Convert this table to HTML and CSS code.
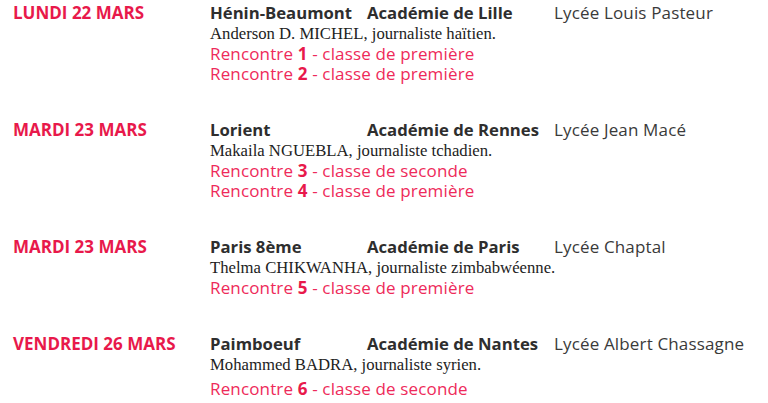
FILE: index.html
```html
<!DOCTYPE html>
<html lang="fr">
<head>
<meta charset="utf-8">
<link rel="stylesheet" href="styles.css">
</head>
<body>
<main class="list">
  <section class="event">
    <div class="date">LUNDI 22 MARS</div>
    <div class="city">Hénin-Beaumont</div>
    <div class="acad">Académie de Lille</div>
    <div class="school">Lycée Louis Pasteur</div>
    <div class="journalist">Anderson D. MICHEL, journaliste haïtien.</div>
    <div class="meet">Rencontre <b>1</b> - classe de première</div>
    <div class="meet">Rencontre <b>2</b> - classe de première</div>
  </section>
  <section class="event">
    <div class="date">MARDI 23 MARS</div>
    <div class="city">Lorient</div>
    <div class="acad">Académie de Rennes</div>
    <div class="school">Lycée Jean Macé</div>
    <div class="journalist">Makaila NGUEBLA, journaliste tchadien.</div>
    <div class="meet">Rencontre <b>3</b> - classe de seconde</div>
    <div class="meet">Rencontre <b>4</b> - classe de première</div>
  </section>
  <section class="event">
    <div class="date">MARDI 23 MARS</div>
    <div class="city">Paris 8ème</div>
    <div class="acad">Académie de Paris</div>
    <div class="school">Lycée Chaptal</div>
    <div class="journalist">Thelma CHIKWANHA, journaliste zimbabwéenne.</div>
    <div class="meet">Rencontre <b>5</b> - classe de première</div>
  </section>
  <section class="event">
    <div class="date">VENDREDI 26 MARS</div>
    <div class="city">Paimboeuf</div>
    <div class="acad">Académie de Nantes</div>
    <div class="school">Lycée Albert Chassagne</div>
    <div class="journalist">Mohammed BADRA, journaliste syrien.</div>
    <div class="meet meet-spaced">Rencontre <b>6</b> - classe de seconde</div>
  </section>
</main>
</body>
</html>
```

FILE: styles.css
```css
html, body {
  margin: 0;
  padding: 0;
  background: #ffffff;
}

body {
  font-family: "Open Sans", "Liberation Sans", sans-serif;
  color: #333333;
}

.list {
  display: flex;
  flex-direction: column;
  gap: 35px;
  padding: 2px 0 0 13px;
}

.event {
  display: grid;
  grid-template-columns: 197px 157px 187px auto;
}

.date,
.city,
.acad,
.school {
  line-height: 22px;
  white-space: nowrap;
}

.date {
  font-size: 17px;
  color: #e8194b;
  font-weight: 700;
}

.city,
.acad {
  font-size: 16.7px;
  font-weight: 700;
  color: #2e2e2e;
}

.school {
  font-size: 17px;
  letter-spacing: 0.15px;
  color: #3a3a3a;
}

.journalist {
  grid-column: 2 / -1;
  font-family: "Liberation Serif", "Times New Roman", serif;
  font-size: 16.7px;
  line-height: 20px;
  color: #222222;
}

.meet {
  grid-column: 2 / -1;
  font-size: 17px;
  letter-spacing: 0.15px;
  line-height: 20px;
  color: #ee2a5a;
}

.meet b {
  font-weight: 700;
  color: #e8194b;
}

.meet-spaced {
  margin-top: 4px;
}
```
